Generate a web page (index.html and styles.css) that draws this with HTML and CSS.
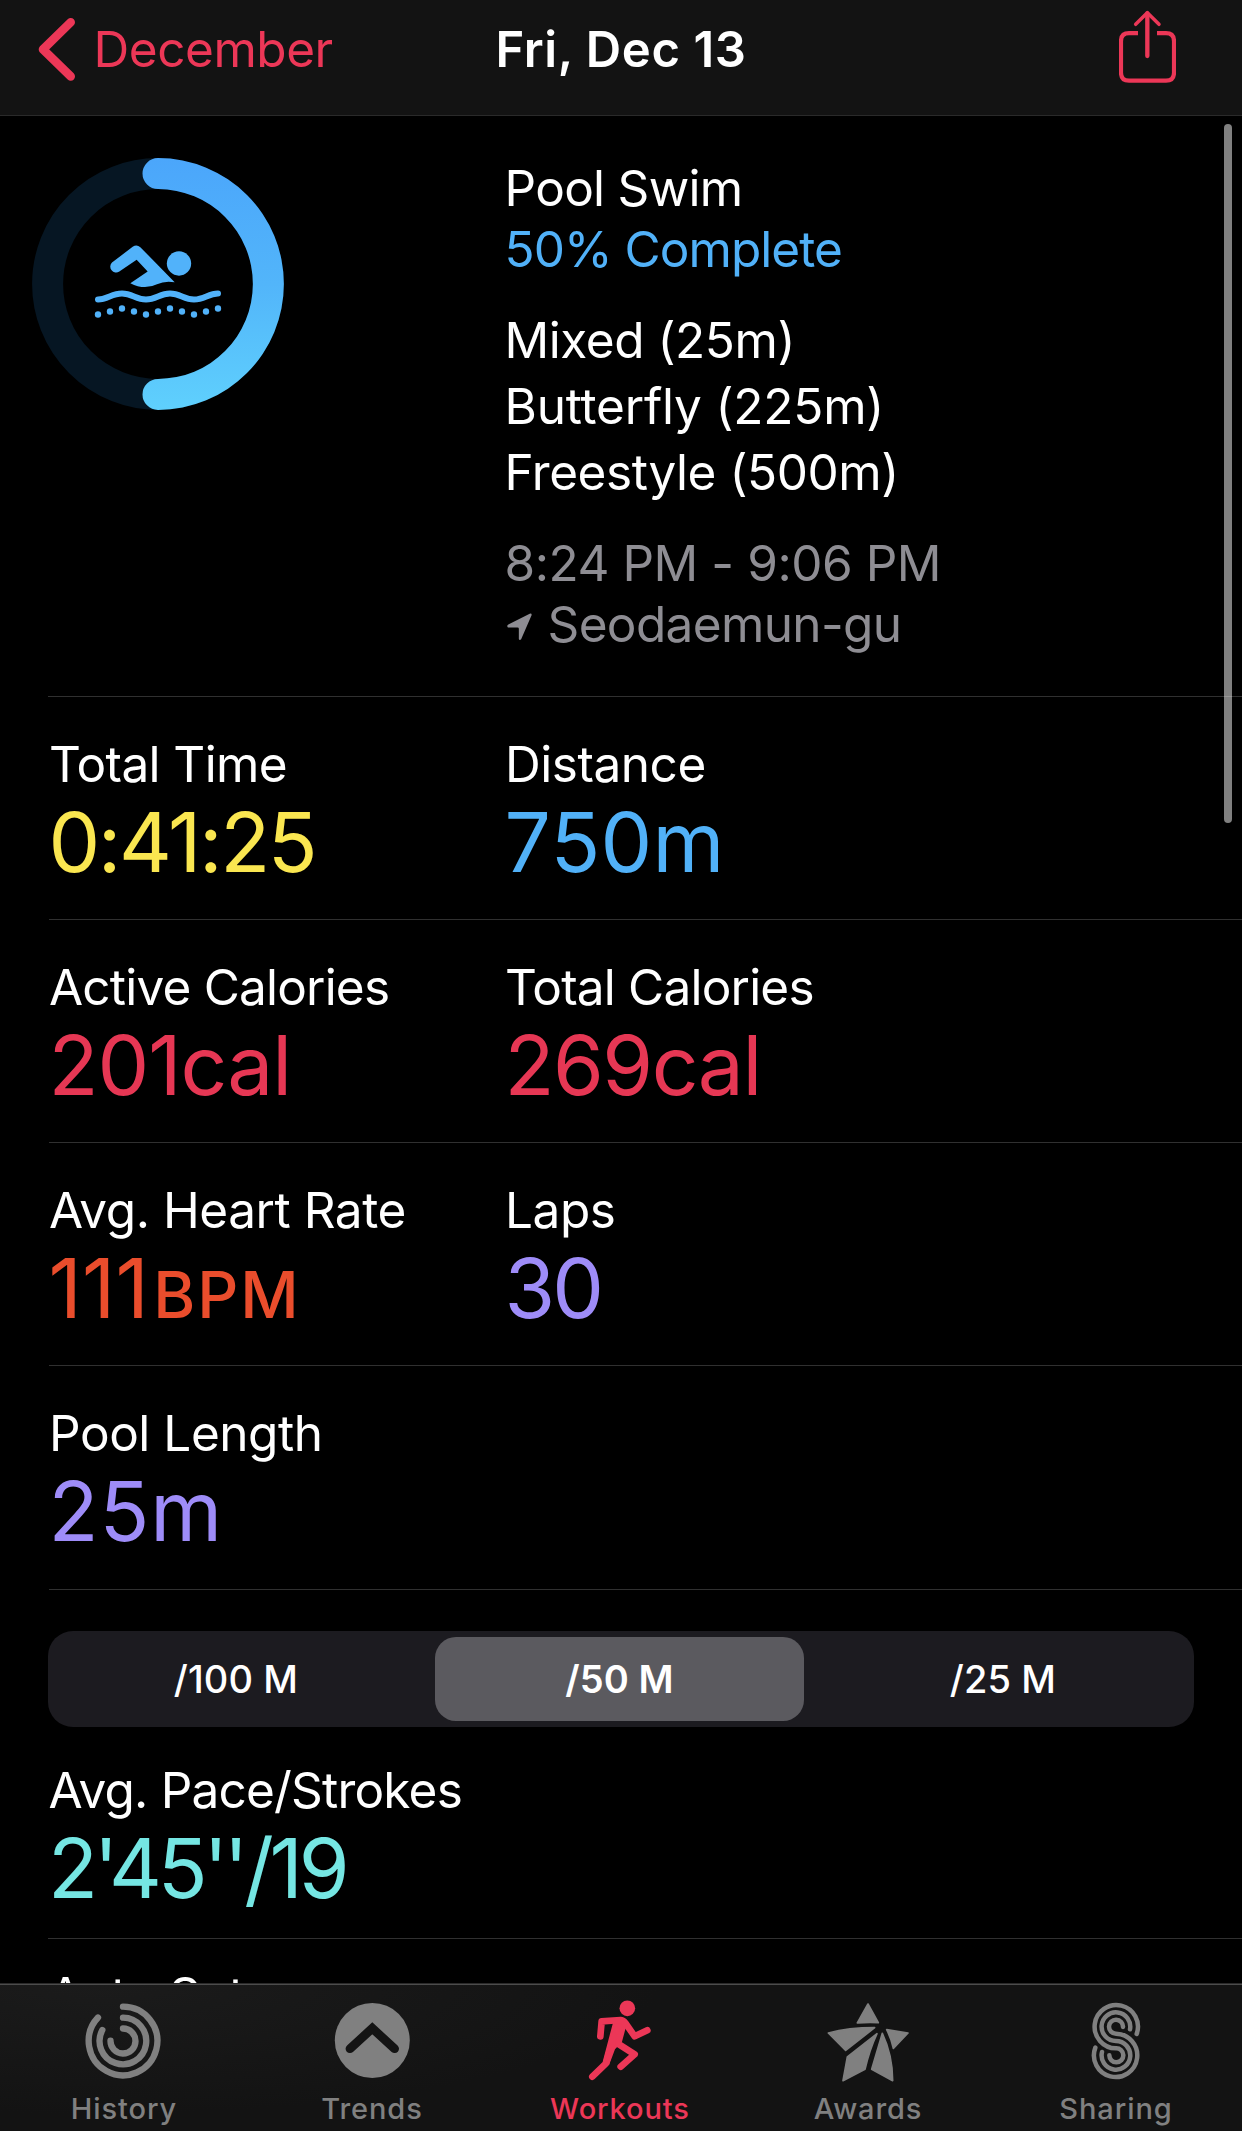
FILE: index.html
```html
<!DOCTYPE html>
<html lang="en">
<head>
<meta charset="utf-8">
<title>Workout Details</title>
<link rel="stylesheet" href="styles.css">
</head>
<body>
<div class="screen">
  <header class="navbar">
    <a class="back">
      <svg class="back-icon" viewBox="38 18 38 63"><path d="M70.7 22.3 L43 49.4 L70.7 76.4" fill="none" stroke="currentColor" stroke-width="8.6" stroke-linecap="round" stroke-linejoin="round"/></svg>
      <span>December</span>
    </a>
    <h1 class="title">Fri, Dec 13</h1>
    <svg class="share" viewBox="42 30 171 222" fill="none" stroke="currentColor">
      <path d="M99 99.500H72Q48 99.500 48 123.500V218Q48 242 72 242H183Q207 242 207 218V123.500Q207 99.500 183 99.500H156" stroke-width="12.500"/>
      <path d="M127 40V168" stroke-width="13" stroke-linecap="round"/>
      <path d="M92 73L127 38L162 73" stroke-width="10.500" stroke-linecap="round" stroke-linejoin="round"/>
    </svg>
  </header>

  <main class="content">
    <section class="summary">
      <svg class="ring" viewBox="0 0 252 252">
        <defs>
          <linearGradient id="progress" x1="0" y1="0" x2="0" y2="1">
            <stop offset="0" stop-color="#4ba6fb"/>
            <stop offset=".5" stop-color="#52b5fa"/>
            <stop offset="1" stop-color="#5fd0fd"/>
          </linearGradient>
        </defs>
        <circle cx="126" cy="126" r="110.400" fill="none" stroke="#061623" stroke-width="31"/>
        <path d="M126 .1A125.900 125.900 0 0 1 126 251.900A15.500 15.500 0 0 1 126 220.900A94.900 94.900 0 0 0 126 31.100A15.500 15.500 0 0 1 126 .1Z" fill="url(#progress)"/>
        <g transform="translate(53 76.500) scale(.33333)" fill="#51b2fa">
          <circle cx="282" cy="87" r="36.500"/>
          <path d="M81 84L143 37Q155 29 166 38L269 143Q239 138 216 149Q178 168 136 146L188 111L155 76L103 111A17.500 17.500 0 0 1 81 84Z"/>
          <path d="M39 195C68 195 80 177 111 177S152 195 183 195S224 177 255 177S296 195 327 195S370 177 399 177" fill="none" stroke="#51b2fa" stroke-width="18" stroke-linecap="round"/>
          <circle cx="39" cy="240" r="9.500"/><circle cx="75" cy="231" r="9.500"/><circle cx="111" cy="222" r="9.500"/><circle cx="147" cy="231" r="9.500"/><circle cx="183" cy="240" r="9.500"/><circle cx="219" cy="231" r="9.500"/><circle cx="255" cy="222" r="9.500"/><circle cx="291" cy="231" r="9.500"/><circle cx="327" cy="240" r="9.500"/><circle cx="363" cy="231" r="9.500"/><circle cx="399" cy="222" r="9.500"/>
        </g>
      </svg>
      <div class="facts">
        <div class="name">Pool Swim</div>
        <div class="goal">50% Complete</div>
        <ul class="strokes">
          <li>Mixed (25m)</li>
          <li class="fly">Butterfly (225m)</li>
          <li>Freestyle (500m)</li>
        </ul>
        <div class="when">8:24 PM - 9:06 PM</div>
        <div class="where">
          <svg class="pin" viewBox="33 38 76 83"><path d="M102 39L37 72Q31 76 36 81H65Q69 81 69 85V116Q71 122 76 117L108 43Q108 37 102 39Z" fill="currentColor"/></svg>
          <span>Seodaemun-gu</span>
        </div>
      </div>
    </section>

    <section class="row">
      <div class="metric"><div class="label tight">Total Time</div><div class="value time">0:41:25</div></div>
      <div class="metric"><div class="label">Distance</div><div class="value distance">750m</div></div>
    </section>
    <section class="row">
      <div class="metric"><div class="label tighter">Active Calories</div><div class="value active">201cal</div></div>
      <div class="metric"><div class="label tighter">Total Calories</div><div class="value total">269cal</div></div>
    </section>
    <section class="row">
      <div class="metric"><div class="label">Avg. Heart Rate</div><div class="value heart">111<span class="unit">BPM</span></div></div>
      <div class="metric"><div class="label">Laps</div><div class="value laps">30</div></div>
    </section>
    <section class="row row-last">
      <div class="metric"><div class="label">Pool Length</div><div class="value length">25m</div></div>
    </section>

    <div class="segments">
      <div class="segment">/100 M</div>
      <div class="segment selected">/50 M</div>
      <div class="segment last">/25 M</div>
    </div>

    <section class="pace">
      <div class="label tighter">Avg. Pace/Strokes</div>
      <div class="value strokes-pace">2'45''/19</div>
    </section>
    <section class="sets"><div class="label">Auto Sets</div></section>
    <div class="scrollbar"></div>
  </main>

  <nav class="tabbar">
    <a class="tab">
      <svg class="tab-icon" viewBox="0 0 90 84"><g transform="translate(-79 -40) scale(.33333)" fill="none" stroke="currentColor" stroke-width="19" stroke-linecap="round">
        <path d="M369 140A103 103 0 1 1 294 172.500"/><path d="M369 173A70 70 0 1 1 307 210"/><path d="M369 205.500A37.500 37.500 0 1 1 331.500 242"/>
      </g></svg>
      <span>History</span>
    </a>
    <a class="tab">
      <svg class="tab-icon" viewBox="0 0 90 84"><circle cx="45.300" cy="40.500" r="37.500" fill="currentColor"/><path d="M23 48.700L45.300 28.300L67.600 48.700" fill="none" stroke="#141414" stroke-width="8.800" stroke-linecap="round"/></svg>
      <span>Trends</span>
    </a>
    <a class="tab current">
      <svg class="tab-icon" viewBox="0 0 90 84"><g transform="translate(-155 -40) scale(.33333)" fill="currentColor">
        <circle cx="622" cy="145" r="23.500"/>
        <path d="M579 188L600 171Q614 171 624 186L616 208L606 245L585 268L567 316L548 305Z"/>
        <g fill="none" stroke="currentColor" stroke-width="20" stroke-linecap="round" stroke-linejoin="round">
          <path d="M541 229L545 184L602 180Q610 181 616 189L644 229L682 211"/>
          <path d="M590 200L558 310L517 350"/>
          <path d="M597 253L644 283L602 320"/>
        </g>
      </g></svg>
      <span>Workouts</span>
    </a>
    <a class="tab">
      <svg class="tab-icon" viewBox="0 0 90 84"><g transform="translate(-3 -40) scale(.33333)" fill="currentColor" stroke="currentColor" stroke-width="5" stroke-linejoin="round">
        <path d="M144 132L175 188Q144 186 112 189Z"/>
        <path d="M25 219Q86 203 164 203L77 271Z"/>
        <path d="M200 209L264 219L220 265Q214 236 200 209Z"/>
        <path d="M171 221L82 291L69 362L135 328Q149 268 171 221Z"/>
        <path d="M187 220L155 328L218 362Q218 286 187 220Z"/>
      </g></svg>
      <span>Awards</span>
    </a>
    <a class="tab">
      <svg class="tab-icon" viewBox="0 0 90 84"><g transform="translate(-251 -40) scale(.33333)" fill="none" stroke="currentColor" stroke-width="13.500" stroke-linecap="round">
        <path d="M950 222A65 65 0 1 0 888 265A21 21 0 1 1 868 286"/>
        <path d="M930 208A43 43 0 1 0 888 243A43 43 0 1 1 846 276"/>
        <path d="M909 201A21 21 0 1 0 888 221A65 65 0 1 1 826 263"/>
      </g></svg>
      <span>Sharing</span>
    </a>
  </nav>
</div>
</body>
</html>
```
FILE: styles.css
```css
* { box-sizing: border-box; }

body {
  margin: 0;
  background: #000;
  color: #fff;
  font-family: Inter, "Liberation Sans", sans-serif;
  font-size: 49.5px;
  letter-spacing: -.45px;
}

.screen {
  display: flex;
  flex-direction: column;
  width: 1242px;
  height: 2131px;
  overflow: hidden;
}

/* Navigation bar */
.navbar {
  display: grid;
  grid-template-columns: 1fr auto 1fr;
  align-items: center;
  flex: none;
  height: 116px;
  padding: 0 66px 17px 38px;
  background: #131313;
  border-bottom: 1px solid #2a2a2a;
}
.back {
  display: flex;
  align-items: center;
  gap: 17.5px;
  color: #ec3757;
}
.back-icon { width: 38px; height: 63px; }
.title {
  margin: 0 0 0 28px;
  font-size: 49px;
  font-weight: 600;
  letter-spacing: .6px;
}
.share {
  justify-self: end;
  width: 57px;
  height: 74px;
  margin-bottom: 4px;
  color: #ec3757;
}

/* Workout details */
.content {
  position: relative;
  flex: 1;
  min-height: 0;
  overflow: hidden;
}
.summary {
  display: flex;
  height: 581px;
  margin-left: 48px;
  padding-top: 42px;
  border-bottom: 1px solid #303030;
}
.ring {
  flex: none;
  width: 252px;
  height: 252px;
  margin: 0 221px 0 -16.500px;
}
.facts { line-height: 61px; }
.name { letter-spacing: -.7px; }
.goal { color: #51b1f8; letter-spacing: -.95px; }
.strokes {
  margin: 26.5px 0 28px;
  padding: 0;
  list-style: none;
  line-height: 66.33px;
}
.fly { letter-spacing: -.2px; }
.when, .where { color: #8e8d93; }
.where {
  display: flex;
  align-items: center;
  gap: 16px;
  letter-spacing: -.63px;
}
.pin { width: 25px; height: 28px; margin: 4px 0 0 2px; }

.row {
  display: grid;
  grid-template-columns: 456px 1fr;
  height: 223px;
  margin-left: 48.500px;
  padding-top: 37px;
  border-bottom: 1px solid #303030;
}
.row-last { height: 224px; }
.label { padding-left: .5px; line-height: 60px; white-space: nowrap; }
.tight { letter-spacing: -.6px; }
.tighter { letter-spacing: -.8px; }
.value {
  margin-top: 8px;
  font-size: 82px;
  line-height: 82px;
  white-space: nowrap;
}
.time { color: #fae650; letter-spacing: -2.4px; }
.distance { color: #51b1f8; letter-spacing: .3px; }
.active { color: #e63754; letter-spacing: -1px; }
.total { color: #e63754; letter-spacing: -1.5px; }
.heart { color: #ea4d2c; letter-spacing: .2px; }
.unit {
  margin-left: 4px;
  font-size: 64px;
  font-weight: 500;
  line-height: 1;
  letter-spacing: 2px;
}
.laps { color: #9e8cf8; letter-spacing: -2.8px; }
.length { color: #9e8cf8; letter-spacing: 1px; }
.strokes-pace { margin-top: 8px; color: #75e6e3; letter-spacing: -4.2px; }

/* Split distance picker */
.segments {
  display: grid;
  grid-template-columns: 376px 390px 380px;
  width: 1146px;
  height: 96px;
  margin: 41px 0 0 48px;
  padding: 6px 0;
  border-radius: 25px;
  background: #1c1b20;
  font-size: 38px;
  font-weight: 500;
  letter-spacing: .1px;
}
.segment { display: flex; align-items: center; justify-content: center; }
.selected {
  margin: 0 10px 0 11px;
  border-radius: 21px;
  background: #5b5a5f;
  font-weight: 600;
}
.last { padding-right: 2px; }

.pace {
  height: 212px;
  margin-left: 48px;
  padding-top: 33px;
  border-bottom: 1px solid #303030;
}
.sets { margin-left: 48px; padding-top: 26px; }

.scrollbar {
  position: absolute;
  top: 8px;
  right: 10px;
  width: 8px;
  height: 699px;
  border-radius: 4px;
  background: rgba(255, 255, 255, .5);
}

/* Tab bar */
.tabbar {
  display: grid;
  grid-template-columns: repeat(5, 248px);
  flex: none;
  height: 148px;
  border-top: 1px solid #2a2a2a;
  background: radial-gradient(ellipse 560px 130px at 100px 0, #1b1b1b, #131313);
  box-shadow: inset 0 1px #4c4c4c;
}
.tab {
  display: flex;
  flex-direction: column;
  align-items: center;
  padding-top: 16px;
  color: #808080;
  font-size: 29px;
  font-weight: 500;
  line-height: 34px;
  letter-spacing: .9px;
}
.tab-icon { width: 90px; height: 84px; margin-bottom: 7.5px; }
.current { color: #ec3757; }
```
